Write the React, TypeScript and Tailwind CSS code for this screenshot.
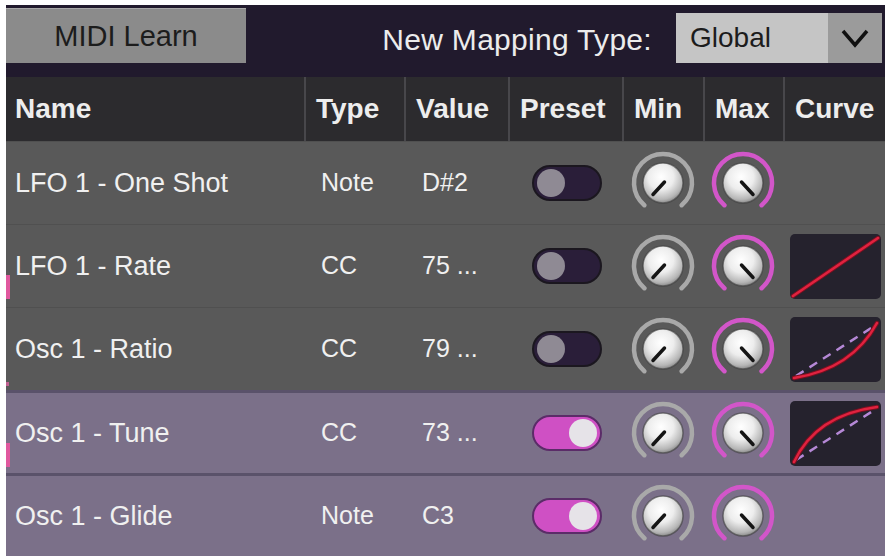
import React from 'react';

type Mapping = {
  name: string;
  type: string;
  value: string;
  preset: boolean;
  curve?: 'linear' | 'exp' | 'log';
  marker?: 'tall' | 'dot';
};

const mappings: Mapping[] = [
  { name: 'LFO 1 - One Shot', type: 'Note', value: 'D#2', preset: false },
  { name: 'LFO 1 - Rate', type: 'CC', value: '75 ...', preset: false, curve: 'linear', marker: 'tall' },
  { name: 'Osc 1 - Ratio', type: 'CC', value: '79 ...', preset: false, curve: 'exp', marker: 'dot' },
  { name: 'Osc 1 - Tune', type: 'CC', value: '73 ...', preset: true, curve: 'log', marker: 'tall' },
  { name: 'Osc 1 - Glide', type: 'Note', value: 'C3', preset: true },
];

const cols = 'grid grid-cols-[298px_100px_104px_114px_81px_80px_102px]';

// rotary knob with a value arc round it
const Knob = ({ ring, side, id }: { ring: string; side: 'min' | 'max'; id: string }) => (
  <svg width="66" height="66" viewBox="0 0 66 66">
    <defs>
      <radialGradient id={id} cx="0.45" cy="0.35" r="0.7">
        <stop offset="0%" stopColor="#ffffff" />
        <stop offset="45%" stopColor="#ededed" />
        <stop offset="80%" stopColor="#b6b6b6" />
        <stop offset="100%" stopColor="#777777" />
      </radialGradient>
    </defs>
    <path d="M14.4 55.2 A29 29 0 1 1 51.6 55.2" fill="none" stroke={ring} strokeWidth="4.5" strokeLinecap="round" />
    <circle cx="33" cy="33" r="20" fill={`url(#${id})`} stroke="#3c3c3c" strokeOpacity="0.6" strokeWidth="1.5" />
    {side === 'min' ? (
      <line x1="34.5" y1="32" x2="23" y2="44.5" stroke="#151515" strokeWidth="3.5" strokeLinecap="round" />
    ) : (
      <line x1="31.5" y1="32" x2="43" y2="44.5" stroke="#151515" strokeWidth="3.5" strokeLinecap="round" />
    )}
  </svg>
);

const Toggle = ({ on }: { on: boolean }) =>
  on ? (
    <div className="w-[70px] h-[36px] rounded-full bg-[#cf50c4] border-2 border-[#5b2c68] flex items-center justify-end pr-[3px]">
      <div className="w-[28px] h-[28px] rounded-full bg-[#e6e3e8]" />
    </div>
  ) : (
    <div className="w-[70px] h-[36px] rounded-full bg-[#2a1e39] border-2 border-[#1b171f] flex items-center pl-[3px]">
      <div className="w-[28px] h-[28px] rounded-full bg-[#8f8a94]" />
    </div>
  );

const Curve = ({ kind }: { kind: 'linear' | 'exp' | 'log' }) => {
  const red = kind === 'linear' ? 'M3 62 L88 4' : kind === 'exp' ? 'M4 61 Q62 52 87 6' : 'M4 61 Q26 14 87 6';
  return (
    <div className="ml-[7px] w-[91px] h-[65px] rounded-[5px] bg-[#25222d] overflow-hidden">
      <svg width="91" height="65" viewBox="0 0 91 65">
        {kind !== 'linear' && (
          <path d="M6 59 L86 8" stroke="#b588d6" strokeWidth="2.5" strokeDasharray="9 7" fill="none" />
        )}
        <path d={red} stroke="#7a1020" strokeWidth="4.5" fill="none" strokeLinecap="round" />
        <path d={red} stroke="#e0223f" strokeWidth="2.5" fill="none" strokeLinecap="round" />
      </svg>
    </div>
  );
};

const headers = ['Name', 'Type', 'Value', 'Preset', 'Min', 'Max', 'Curve'];

export default function App() {
  return (
    <div className="min-h-screen bg-white pt-[5px] pl-[6px] font-['Liberation_Sans',Arial,sans-serif]">
      <div className="w-[879px] bg-[#211a2d] relative">
        {/* top bar */}
        <div className="h-[72px] flex items-start">
          <button className="mt-[3px] w-[240px] h-[55px] bg-[#8b8b8b] border-t border-[#a8a8a8] text-[#1c1c1c] text-[29px] leading-none">
            MIDI Learn
          </button>
          <span className="ml-auto mt-[20px] text-[#ececec] text-[30px] leading-none tracking-[0.3px]">
            New Mapping Type:
          </span>
          <div className="ml-[24px] mr-[3px] mt-[8px] w-[206px] h-[50px] flex">
            <div className="flex-1 bg-[#c5c5c5] flex items-center pl-[14px] text-[#1c1c1c] text-[28px]">Global</div>
            <div className="w-[54px] bg-[#9b9b9b] flex items-center justify-center">
              <svg width="30" height="22" viewBox="0 0 30 22">
                <path d="M3 4 L15 18 L27 4" fill="none" stroke="#111" strokeWidth="3.5" />
              </svg>
            </div>
          </div>
        </div>

        {/* column headers */}
        <div className={`${cols} h-[64px] bg-[#2c2b2e]`}>
          {headers.map((h, i) => (
            <div
              key={h}
              className={`flex items-center text-[#ededed] font-bold text-[28px] ${
                i === 0 ? 'pl-[9px]' : 'pl-[10px] border-l-2 border-[#48474b]'
              }`}
            >
              {h}
            </div>
          ))}
        </div>

        {/* mapping rows */}
        {mappings.map((m, i) => (
          <div
            key={m.name}
            className={`${cols} relative h-[83px] text-[#f0f0f0] ${
              m.preset
                ? 'bg-[#7b7089] border-t-[3px] border-[#5a526a]'
                : 'bg-[#595959] border-t border-[#505050]'
            }`}
          >
            {m.marker === 'tall' && (
              <div className="absolute left-0 top-[50px] w-[4px] h-[24px] bg-[#e0589e]" />
            )}
            {m.marker === 'dot' && <div className="absolute left-0 top-[74px] w-[3px] h-[4px] bg-[#c06090]" />}
            <div className="flex items-center pl-[9px] text-[27px]">{m.name}</div>
            <div className="flex items-center pl-[17px] text-[25px]">{m.type}</div>
            <div className="flex items-center pl-[18px] text-[25px]">{m.value}</div>
            <div className="flex items-center justify-center pl-[4px]">
              <Toggle on={m.preset} />
            </div>
            <div className="flex items-center justify-center">
              <Knob ring="#a9a9a9" side="min" id={`kmin${i}`} />
            </div>
            <div className="flex items-center justify-center">
              <Knob ring="#d256c9" side="max" id={`kmax${i}`} />
            </div>
            <div className="flex items-center">{m.curve && <Curve kind={m.curve} />}</div>
          </div>
        ))}
      </div>
    </div>
  );
}
